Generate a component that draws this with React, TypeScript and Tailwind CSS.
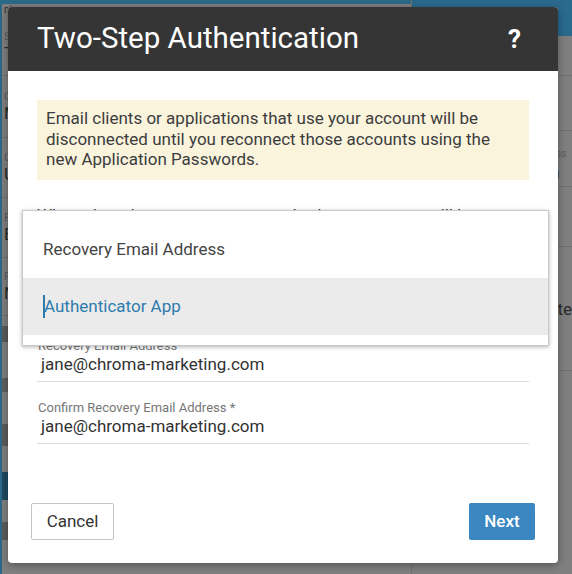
const font = { fontFamily: "Roboto, 'Liberation Sans', sans-serif" };

function BgRow({ label, value, h }: { label: string; value: string; h: string }) {
  return (
    <div className={`${h} border-b border-[#6f6f6f] pl-[2px] flex flex-col justify-center`}>
      <span className="text-[11px] leading-[13px] text-[#5a5a5a]">{label}</span>
      <span className="text-[17px] leading-[20px] text-[#2a2a2a]">{value}</span>
    </div>
  );
}

export default function App() {
  return (
    <div className="relative w-[572px] h-[574px] overflow-hidden bg-[#7f7f7f]" style={font}>
      {/* dimmed page behind the modal */}
      <div className="flex h-full border-l-[2px] border-[#2b6a87]">
        <div className="w-[436px] flex flex-col">
          <div className="h-[4px] bg-[#2b6a87]" />
          <div className="h-[14px] text-[10px] leading-[12px] text-[#2a2a2a] pl-[2px]">nts</div>
          <BgRow label="Street" value="Tow" h="h-[58px]" />
          <BgRow label="Company" value="Mail" h="h-[62px]" />
          <BgRow label="Country" value="United" h="h-[60px]" />
          <BgRow label="Province" value="English" h="h-[60px]" />
          <BgRow label="Records" value="None" h="h-[58px]" />
          <div className="mt-[10px] h-[16px] bg-[#5a5a5a]" />
          <div className="mt-[36px] h-[14px] bg-[#5f5f5f]" />
          <div className="mt-[32px] h-[22px] bg-[#5c5c5c]" />
          <div className="mt-[26px] h-[28px] bg-[#1d4a60]" />
          <div className="mt-[22px] h-[18px] bg-[#5c5c5c]" />
        </div>
        <div className="flex-1 flex flex-col border-l border-[#727272]">
          <div className="h-[36px] bg-[#2a6a8d]" />
          <div className="h-[40px] border-b border-[#6f6f6f]" />
          <div className="h-[55px] border-b border-[#6f6f6f] flex items-end pb-[8px] pl-[118px] text-[17px] text-[#2a2a2a]">ting</div>
          <div className="h-[56px] border-b border-[#6f6f6f] flex flex-col justify-end pb-[4px] pl-[114px]">
            <span className="text-[11px] text-[#5a5a5a]">Address</span>
            <span className="text-[17px] leading-[20px] text-[#2a2a2a]">com</span>
          </div>
          <div className="h-[60px] border-b border-[#6f6f6f] flex items-end pb-[6px] pl-[118px] text-[17px] text-[#5a5a5a]">ing</div>
          <div className="h-[124px] border-b border-[#6f6f6f] pt-[50px] pl-[112px] text-[17px] text-[#2a2a2a]">Delete</div>
        </div>
      </div>

      {/* modal */}
      <div className="absolute left-[8px] top-[7px] w-[550px] h-[556px] bg-white rounded-[4px] shadow-[0_2px_8px_rgba(0,0,0,0.35)] flex flex-col">
        <div className="h-[64px] bg-[#353535] rounded-t-[4px] flex items-center justify-between pl-[29px] pr-[37px]">
          <h1 className="text-[29.5px] leading-none text-white">Two-Step Authentication</h1>
          <span className="text-[26px] font-bold text-white leading-none">?</span>
        </div>

        <div className="relative flex-1 flex flex-col px-[29px] pt-[29px]">
          <div className="h-[80px] bg-[#faf4dd] px-[9px] pt-[8px] text-[17px] leading-[20.5px] text-[#3d3d3d]">
            Email clients or applications that use your account will be disconnected until you reconnect those accounts using the new Application Passwords.
          </div>

          <p className="mt-[25px] text-[17px] leading-[21px] text-[#3d3d3d]">
            When changing your recovery method your account will be secured with a new code
            sent to your selected method.
          </p>

          <div className="mt-[14px] h-[64px] border-b border-[#dcdcdc]" />

          <div className="mt-[14px] border-b border-[#dcdcdc] pb-[6px]">
            <div className="text-[13px] leading-[14px] text-[#777] pl-[1px]">Recovery Email Address</div>
            <div className="text-[17px] leading-[22px] text-[#333] pl-[4px]">jane@chroma-marketing.com</div>
          </div>
          <div className="mt-[19px] border-b border-[#dcdcdc] pb-[6px]">
            <div className="text-[13px] leading-[14px] text-[#777] pl-[1px]">Confirm Recovery Email Address *</div>
            <div className="text-[17px] leading-[22px] text-[#333] pl-[4px]">jane@chroma-marketing.com</div>
          </div>

          <div className="mt-auto mb-[23px] -mx-[6px] flex items-center justify-between">
            <button className="h-[37px] w-[83px] border border-[#c4c4c4] rounded-[2px] bg-white text-[17px] text-[#333]">
              Cancel
            </button>
            <button className="h-[37px] w-[66px] rounded-[2px] bg-[#3b87c1] text-[17px] font-medium text-white">
              Next
            </button>
          </div>

          {/* open select menu */}
          <div className="absolute left-[14px] top-[139px] w-[527px] bg-white border border-[#c8c8c8] shadow-[0_1px_4px_rgba(0,0,0,0.3)] pt-[10px] pb-[10px]">
            <div className="h-[57px] flex items-center px-[20px] text-[17px] text-[#444]">Recovery Email Address</div>
            <div className="h-[57px] flex items-center px-[20px] bg-[#ebebeb] text-[17px] text-[#2f7cab]">
              <span className="w-[2px] h-[23px] bg-[#2f7cab] -mr-[1px]" />
              Authenticator App
            </div>
          </div>
        </div>
      </div>
    </div>
  );
}
